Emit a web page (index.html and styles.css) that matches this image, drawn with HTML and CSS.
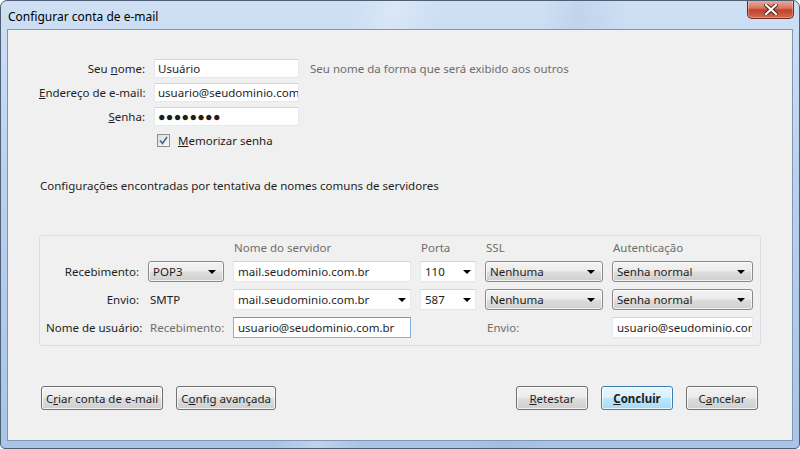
FILE: index.html
```html
<!DOCTYPE html>
<html lang="pt-BR">
<head>
    <meta charset="UTF-8">
    <title>Configurar conta de e-mail</title>
    <link rel="stylesheet" href="styles.css">
</head>
<body>
    <div class="janela">
        <div class="barra-titulo">
            <span class="titulo">Configurar conta de e-mail</span>
            <span class="fechar">
                <svg width="14" height="11" viewBox="0 0 14 11">
                    <path d="M2 1 L12 10 M12 1 L2 10" stroke="#4a2018" stroke-width="4" stroke-linecap="square"/>
                    <path d="M2 1 L12 10 M12 1 L2 10" stroke="#fff" stroke-width="2.2" stroke-linecap="square"/>
                </svg>
            </span>
        </div>

        <div class="conteudo">
            <div class="identidade">
                <span class="rotulo">Seu <u>n</u>ome:</span>
                <div class="campo">Usuário</div>
                <span class="dica">Seu nome da forma que será exibido aos outros</span>

                <span class="rotulo"><u>E</u>ndereço de e-mail:</span>
                <div class="campo">usuario@seudominio.com</div>
                <span></span>

                <span class="rotulo"><u>S</u>enha:</span>
                <div class="campo senha">●●●●●●●●</div>
                <span></span>

                <span></span>
                <label class="lembrar">
                    <span class="caixa">
                        <svg width="9" height="9" viewBox="0 0 9 9"><path d="M1 4.5 L3.5 7.5 L8 1" fill="none" stroke="#4a5f97" stroke-width="1.6"/></svg>
                    </span>
                    <span><u>M</u>emorizar senha</span>
                </label>
                <span></span>
            </div>

            <p class="status">Configurações encontradas por tentativa de nomes comuns de servidores</p>

            <div class="servidores">
                <span></span>
                <span></span>
                <span class="cabecalho">Nome do servidor</span>
                <span class="cabecalho">Porta</span>
                <span class="cabecalho">SSL</span>
                <span class="cabecalho">Autenticação</span>

                <span class="rotulo">Recebimento:</span>
                <div class="seletor">POP3 <i class="seta"></i></div>
                <div class="campo">mail.seudominio.com.br</div>
                <div class="campo com-seta">110 <i class="seta"></i></div>
                <div class="seletor">Nenhuma <i class="seta"></i></div>
                <div class="seletor">Senha normal <i class="seta"></i></div>

                <span class="rotulo">Envio:</span>
                <span class="texto">SMTP</span>
                <div class="campo com-seta">mail.seudominio.com.br <i class="seta"></i></div>
                <div class="campo com-seta">587 <i class="seta"></i></div>
                <div class="seletor">Nenhuma <i class="seta"></i></div>
                <div class="seletor">Senha normal <i class="seta"></i></div>

                <span class="rotulo">Nome de usuário:</span>
                <span class="texto cinza">Recebimento:</span>
                <div class="campo foco">usuario@seudominio.com.br</div>
                <span></span>
                <span class="texto cinza">Envio:</span>
                <div class="campo corte">usuario@seudominio.com</div>
            </div>

            <div class="acoes">
                <div class="grupo">
                    <button class="botao">C<u>r</u>iar conta de e-mail</button>
                    <button class="botao">C<u>o</u>nfig avançada</button>
                </div>
                <div class="grupo">
                    <button class="botao"><u>R</u>etestar</button>
                    <button class="botao padrao"><u>C</u>oncluir</button>
                    <button class="botao">C<u>a</u>ncelar</button>
                </div>
            </div>
        </div>
    </div>
</body>
</html>
```

FILE: styles.css
```css
:root {
    --fundo: #f0f0f0;
    --texto: #1e1e1e;
    --cinza: #6d6d6d;
}

body {
    margin: 0;
    width: 800px;
    height: 449px;
    font-family: "Noto Sans", "Open Sans", sans-serif;
    font-size: 11.5px;
    color: var(--texto);
    background: #fff;
}

.janela {
    box-sizing: border-box;
    width: 800px;
    height: 449px;
    border: 1px solid #4d5f74;
    border-radius: 7px 7px 5px 5px;
    padding: 0 6px 7px 6px;
    display: flex;
    flex-direction: column;
    background:
        linear-gradient(100deg, transparent 40%, rgba(255,255,255,0.25) 45%, transparent 50%, transparent 62%, rgba(120,150,190,0.15) 66%, transparent 72%),
        linear-gradient(180deg, #cfe0f4 0%, #b9d1ee 40%, #a9c4e6 100%);
    overflow: hidden;
}

.barra-titulo {
    height: 28px;
    display: flex;
    justify-content: space-between;
    align-items: flex-start;
}

.titulo {
    margin: 7px 0 0 1px;
    font-size: 12px;
    color: #000;
}

.fechar {
    width: 45px;
    height: 18px;
    margin-right: -1px;
    margin-top: -1px;
    display: flex;
    align-items: center;
    justify-content: center;
    border: 1px solid #6b2b20;
    border-top: none;
    border-radius: 0 0 5px 5px;
    background: linear-gradient(180deg, #eab1a3 0%, #d8775f 45%, #c2412a 55%, #d46a4f 100%);
    box-shadow: inset 0 0 0 1px rgba(255,255,255,0.3);
}

.conteudo {
    flex: 1;
    border: 1px solid #8197b0;
    background: var(--fundo);
    padding: 0 31px;
    display: flex;
    flex-direction: column;
}

/* bloco de identidade */
.identidade {
    margin-top: 29px;
    display: grid;
    grid-template-columns: 106px 145px auto;
    grid-auto-rows: 19px;
    column-gap: 9px;
    row-gap: 5px;
    align-items: center;
}

.rotulo {
    text-align: right;
    white-space: nowrap;
}

.dica {
    color: var(--cinza);
    margin-left: 2px;
}

.campo {
    box-sizing: border-box;
    height: 100%;
    background: #fff;
    border: 1px solid #e3e9ef;
    border-top-color: #d2d6db;
    padding: 0 3px;
    display: flex;
    align-items: center;
    white-space: nowrap;
    overflow: hidden;
}

.senha {
    font-size: 12.5px;
    letter-spacing: 0.3px;
}

.lembrar {
    display: flex;
    align-items: center;
    gap: 8px;
    padding-left: 3px;
}

.caixa {
    box-sizing: border-box;
    width: 13px;
    height: 13px;
    border: 1px solid #8f8f8f;
    background: linear-gradient(135deg, #dcdcdc, #fbfbfb);
    display: flex;
    align-items: center;
    justify-content: center;
}

.status {
    margin: 28px 0 0 1px;
    line-height: 16px;
}

/* grupo de servidores */
.servidores {
    margin-top: 41px;
    border: 1px solid #d8dde2;
    border-radius: 3px;
    padding: 5px 6px 7px 6px;
    display: grid;
    grid-template-columns: 93px 76px 178px 56px 118px 141px;
    grid-template-rows: 13px 21px 21px 21px;
    column-gap: 9px;
    row-gap: 7px;
    align-items: center;
}

.servidores .campo {
    padding-left: 4px;
}

.cabecalho {
    color: var(--cinza);
    padding-left: 1px;
}

.texto {
    padding-left: 2px;
}

.cinza {
    color: var(--cinza);
}

.com-seta {
    justify-content: space-between;
}

.foco {
    border-color: #7eb4ea;
    border-top-color: #569de5;
}

.seletor {
    box-sizing: border-box;
    height: 100%;
    border: 1px solid #8a8a8a;
    border-radius: 3px;
    padding: 0 6px 0 4px;
    display: flex;
    align-items: center;
    justify-content: space-between;
    background: linear-gradient(180deg, #f3f3f3 0%, #ebebeb 48%, #dddddd 52%, #cfcfcf 100%);
    box-shadow: inset 0 0 0 1px rgba(255,255,255,0.7);
}

.seta {
    width: 0;
    height: 0;
    border-left: 4px solid transparent;
    border-right: 4px solid transparent;
    border-top: 4px solid #000;
    margin-right: 1px;
}

/* botoes */
.acoes {
    margin: 40px 3px 0 2px;
    display: flex;
    justify-content: space-between;
}

.grupo {
    display: flex;
    gap: 13px;
}

.botao {
    box-sizing: border-box;
    height: 24px;
    min-width: 72px;
    padding: 0 4px;
    font-family: inherit;
    font-size: 11.5px;
    color: var(--texto);
    border: 1px solid #707070;
    border-radius: 3px;
    background: linear-gradient(180deg, #f2f2f2 0%, #ebebeb 48%, #dddddd 52%, #cfcfcf 100%);
    box-shadow: inset 0 0 0 1px rgba(255,255,255,0.75);
}

.padrao {
    font-weight: bold;
    border-color: #3c7fb1;
    background: linear-gradient(180deg, #eaf6fd 0%, #d9f0fc 48%, #bee6fd 52%, #a7d9f5 100%);
}
```
